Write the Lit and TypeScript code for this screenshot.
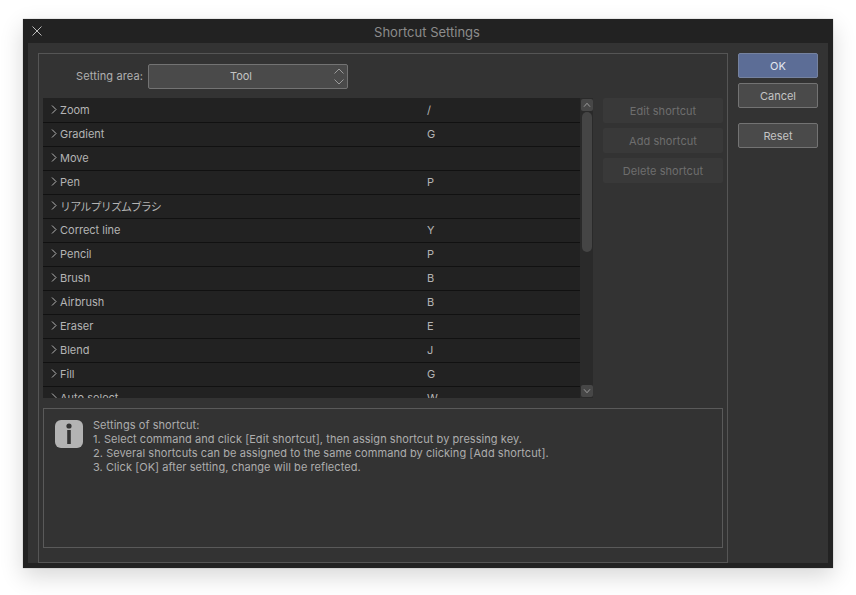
import { LitElement, html, css, svg } from "lit";
import { customElement } from "lit/decorators.js";

const ROWS: [string, string][] = [
  ["Zoom", "/"], ["Gradient", "G"], ["Move", ""], ["Pen", "P"], ["リアルプリズムブラシ", ""],
  ["Correct line", "Y"], ["Pencil", "P"], ["Brush", "B"], ["Airbrush", "B"], ["Eraser", "E"],
  ["Blend", "J"], ["Fill", "G"], ["Auto select", "W"],
];

const chev = svg`<path d="M1 5.5 L4.5 1.5 L8 5.5" fill="none" stroke="currentColor" stroke-width="1"/>`;
const isJa = (s: string) => /[\u30a0-\u30ff]/.test(s);

@customElement("app-root")
export class AppRoot extends LitElement {
  static styles = css`
    :host { display: block; width: 856px; height: 595px; background: #fff; padding: 19px 0 0 23px; box-sizing: border-box; overflow: hidden;
      font-family: Inter, "Liberation Sans", "Noto Sans CJK JP", sans-serif; font-size: 11px; color: #b4b4b4; }
    * { box-sizing: border-box; }
    .win { width: 810px; height: 549px; background: #222; display: flex; flex-direction: column;
      box-shadow: 0 8px 22px rgba(0,0,0,.16), 0 0 1px rgba(0,0,0,.4); }
    .title { height: 24px; flex: none; display: flex; align-items: center; justify-content: center; position: relative; font-size: 13px; padding: 2px 2px 0 0; color: #8c8c8c; }
    .close { position: absolute; left: 9px; top: 7px; width: 10px; height: 10px; color: #bdbdbd; }
    .body { margin: 0 5px; height: 520px; background: #333; display: flex; padding: 10px 10px 0 10px; }
    .group { width: 690px; height: 510px; border: 1px solid #555; padding: 9px 4px 0 4px; display: flex; flex-direction: column; }
    .area { display: flex; align-items: center; height: 26px; margin-bottom: 9px; }
    .area label { width: 105px; text-align: right; padding-right: 5px; color: #b0b0b0; letter-spacing: .12px; }
    .select { width: 200px; height: 25px; background: #4a4a4a; border: 1px solid #737373; border-radius: 2px; display: flex; align-items: center; justify-content: center; position: relative; color: #c4c4c4; padding-right: 14px; }
    .spin { position: absolute; right: 3px; top: 3px; width: 10px; height: 17px; color: #9a9a9a; }
    .mid { display: flex; gap: 10px; height: 300px; }
    .list { width: 550px; height: 300px; display: flex; background: #222; }
    .rows { width: 537px; height: 300px; overflow: hidden; padding-top: 1px; }
    .row { height: 24px; border-bottom: 1px solid #111; display: flex; align-items: center; padding: 0 0 2px 8px; color: #b4b4b4; }
    .row svg { width: 6px; height: 9px; color: #b4b4b4; flex: none; margin-right: 3px; }
    .name { width: 367px; }
    .name.ja { letter-spacing: -.8px; }
    .bar { width: 13px; background: #2a2a2a; display: flex; flex-direction: column; align-items: center; padding: 1px 0; }
    .arrow { width: 12px; height: 12px; background: #474747; border-radius: 2px; color: #a8a8a8; display: flex; align-items: center; justify-content: center; flex: none; }
    .arrow svg { width: 8px; height: 6px; }
    .thumb { width: 10px; height: 140px; margin-top: 1px; background: #454545; border-radius: 5px; flex: none; }
    .side { display: flex; flex-direction: column; gap: 5px; }
    .dis { width: 120px; height: 25px; background: #393939; border-radius: 2px; display: flex; align-items: center; justify-content: center; color: #6e6e6e; letter-spacing: .05px; }
    .info { margin-top: 10px; width: 680px; height: 140px; border: 1px solid #5a5a5a; padding: 11px; display: flex; gap: 10px; }
    .icon { width: 28px; height: 28px; background: #b3b3b3; border-radius: 6px; flex: none; color: #333; }
    .icon svg { display: block; width: 28px; height: 28px; }
    .text { line-height: 14px; margin-top: -2px; color: #adadad; white-space: pre; letter-spacing: .06px; }
    .btns { margin-left: 10px; width: 80px; display: flex; flex-direction: column; }
    .btn { height: 25px; width: 80px; background: #4a4a4a; border: 1px solid #737373; border-radius: 2px; display: flex; align-items: center; justify-content: center; color: #c4c4c4; margin-bottom: 5px; }
    .btn.ok { background: #5c6d96; border-color: #75829f; color: #e2e6ee; }
    .btn.reset { margin-top: 10px; }
  `;

  render() {
    return html`<div class="win">
      <div class="title">
        <svg class="close" viewBox="0 0 10 10"><path d="M.5 .5 L9.5 9.5 M9.5 .5 L.5 9.5" stroke="currentColor" stroke-width="1" fill="none"/></svg>
        Shortcut Settings
      </div>
      <div class="body">
        <div class="group">
          <div class="area">
            <label>Setting area:</label>
            <div class="select">Tool
              <svg class="spin" viewBox="0 0 10 17"><path d="M.5 5.5 L5 1 L9.5 5.5 M.5 11.5 L5 16 L9.5 11.5" stroke="currentColor" stroke-width="1" fill="none"/></svg>
            </div>
          </div>
          <div class="mid">
            <div class="list">
              <div class="rows">
                ${ROWS.map(([n, k]) => html`<div class="row">
                  <svg viewBox="0 0 6 9"><path d="M1 .5 L5 4.5 L1 8.5" stroke="currentColor" stroke-width="1" fill="none"/></svg>
                  <span class="name ${isJa(n) ? "ja" : ""}">${n}</span><span>${k}</span>
                </div>`)}
              </div>
              <div class="bar">
                <div class="arrow"><svg viewBox="0 0 9 7">${chev}</svg></div>
                <div class="thumb"></div>
                <div style="flex:1"></div>
                <div class="arrow"><svg viewBox="0 0 9 7" style="transform:scaleY(-1)">${chev}</svg></div>
              </div>
            </div>
            <div class="side">
              <div class="dis">Edit shortcut</div>
              <div class="dis">Add shortcut</div>
              <div class="dis">Delete shortcut</div>
            </div>
          </div>
          <div class="info">
            <div class="icon"><svg viewBox="0 0 28 28"><circle cx="14" cy="6" r="2.6" fill="currentColor"/><rect x="12.2" y="10" width="3.6" height="14" fill="currentColor"/></svg></div>
            <div class="text">Settings of shortcut:
1. Select command and click [Edit shortcut], then assign shortcut by pressing key.
2. Several shortcuts can be assigned to the same command by clicking [Add shortcut].
3. Click [OK] after setting, change will be reflected.</div>
          </div>
        </div>
        <div class="btns">
          <div class="btn ok">OK</div>
          <div class="btn">Cancel</div>
          <div class="btn reset">Reset</div>
        </div>
      </div>
    </div>`;
  }
}
